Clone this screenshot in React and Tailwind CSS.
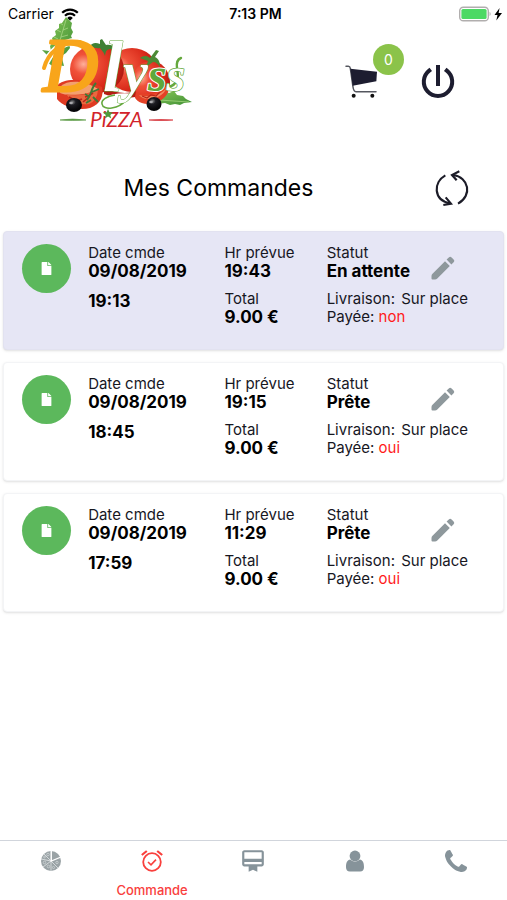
import { FaFile } from 'react-icons/fa';
import { MdCardMembership } from 'react-icons/md';

const orders = [
  { id: 1, date: '09/08/2019', time: '19:13', due: '19:43', total: '9.00 €', status: 'En attente', delivery: 'Sur place', paid: 'non', pending: true },
  { id: 2, date: '09/08/2019', time: '18:45', due: '19:15', total: '9.00 €', status: 'Prête', delivery: 'Sur place', paid: 'oui', pending: false },
  { id: 3, date: '09/08/2019', time: '17:59', due: '11:29', total: '9.00 €', status: 'Prête', delivery: 'Sur place', paid: 'oui', pending: false },
];

function WifiIcon() {
  return (
    <svg viewBox="0 0 18 13" className="w-[18px] h-[13px]" fill="none" stroke="#000" strokeWidth="2.2">
      <path d="M1.2 4.8a11 11 0 0 1 15.6 0" />
      <path d="M4 7.8a7 7 0 0 1 10 0" />
      <path d="M9 12.8 6.2 9.9a4 4 0 0 1 5.6 0z" fill="#000" stroke="none" />
    </svg>
  );
}

function BatteryIcon() {
  return (
    <svg viewBox="0 0 44 16" className="w-11 h-4">
      <rect x="0.7" y="1.2" width="28.6" height="13.6" rx="3.6" fill="#fff" stroke="#b1aeae" strokeWidth="1.4" />
      <rect x="2.4" y="3" width="25.2" height="10" rx="1.6" fill="#4cd964" />
      <path d="M30.6 5.8q2 2.2 0 4.4z" fill="#a5a5a5" />
      <path d="M40.6 2 35.5 9h3l-1.2 5.4L43 7h-3.4z" fill="#000" />
    </svg>
  );
}

function Logo() {
  return (
    <svg viewBox="0 0 156 116" className="w-[156px] h-[116px]" role="img" aria-label="Dlyss Pizza">
      <defs>
        <radialGradient id="tomato" cx="0.25" cy="0.4" r="0.8">
          <stop offset="0" stopColor="#ffb09a" />
          <stop offset="0.25" stopColor="#f0523a" />
          <stop offset="0.7" stopColor="#d92a1a" />
          <stop offset="1" stopColor="#a81710" />
        </radialGradient>
        <radialGradient id="olive" cx="0.4" cy="0.3" r="0.6">
          <stop offset="0" stopColor="#888" />
          <stop offset="0.35" stopColor="#1c1c22" />
          <stop offset="1" stopColor="#050507" />
        </radialGradient>
        <linearGradient id="leaf" x1="0" y1="0" x2="1" y2="1">
          <stop offset="0" stopColor="#86c556" />
          <stop offset="1" stopColor="#3f8f35" />
        </linearGradient>
      </defs>

      {/* basil leaves */}
      <path d="M28 1 24 7l-3 1 0 4-4 3 1 4-4 3 1 4-3 4 1 5-2 5 3 3 8-2 6-4 4-5-1-4 4-4-2-4 2-4-2-4 1-5-3-3z" fill="url(#leaf)" />
      <path d="M28 4 22 24 14 42M25 14l5-2m-7 9 7-2m-9 8 7-2m-3-16-3-2m1 9-4-2m1 9-4-2" stroke="#b2db8e" strokeWidth="0.7" fill="none" />
      <path d="m4 34 7 1 4-2 8 5 3 12-7-1 3 10-9 0 3-8-6-4 2-5z" fill="#5ba443" />
      <path d="m118 80 9-5 4 2 5-2 3 4 6 1 3 3 6 3-8 1-4 2-5-1-5 1-5-2-9 1z" fill="url(#leaf)" />
      <path d="m121 84 30 2" stroke="#a5d67f" strokeWidth="0.8" />

      {/* tomatoes */}
      <ellipse cx="94" cy="54" rx="25" ry="22" fill="url(#tomato)" />
      <ellipse cx="113" cy="66" rx="19" ry="21" fill="url(#tomato)" />
      <ellipse cx="59" cy="53" rx="27" ry="24" fill="url(#tomato)" />
      <path d="M62 28c-5-2-8-1-11 3 5 0 8 2 11 1 2 3 4 4 5 8 1-5 1-6 5-7 3 0 6 1 9 4-1-5-6-9-13-8l-4-6-2 1z" fill="#3f8134" />
      <path d="M112 42c-4-3-7-2-10 0l8 3-2 6 7-5c3 0 5 2 7 5 0-5-1-8-5-10l4-6-3-1z" fill="#4c8a35" />

      {/* cut halves */}
      <path d="M19 70c6-9 30-7 45 1 2 8-1 17-12 21-11 3-27-1-33-9z" fill="#df3a22" />
      <path d="M23 70c7-7 26-5 37 3-6 5-30 8-38 4z" fill="#f3a06f" />
      <path d="M28 78q13 4 32-4-1 11-9 14-15 2-23-10" fill="#e9683f" />
      <path d="M31 81q7 5 13 2m3-2q4-1 8-4m-10 9 6-5" stroke="#b9261a" strokeWidth="1.6" fill="none" />
      <path d="M58 67c-6 6-4 12-9 17m5-8 7-3m-9 8-5-3m8 3 5 5m-7-2-5 3" stroke="#3b7b36" strokeWidth="1.8" fill="none" />
      <path d="M96 75c13 7 29 1 35-8 2 12-8 20-21 21-9 0-15-5-14-13z" fill="#e44227" />
      <path d="M101 79c10 3 21 0 27-6-3 9-21 14-27 6z" fill="#f38b61" />
      <path d="m104 80 5 2 4-3 5 1 4-4" stroke="#b9261a" strokeWidth="1.2" fill="none" />
      <path d="M66 72q18 8 32 3l-1 6q-16 3-31-3z" fill="#b51c13" />

      {/* olives */}
      <ellipse cx="36" cy="89" rx="8" ry="7" fill="url(#olive)" />
      <ellipse cx="116" cy="88" rx="7.5" ry="7" fill="url(#olive)" />
      <ellipse cx="33" cy="87" rx="1.8" ry="1.3" fill="#a9a9ad" />
      <ellipse cx="113" cy="86" rx="1.8" ry="1.3" fill="#a9a9ad" />

      {/* swashes around the name */}
      <path d="M93 80c-12-1-27 1-28 8-1 8 17 6 24-3" stroke="#fff" strokeWidth="5" fill="none" />
      <path d="M77 79c-8 1-14 5-13 9 1 7 17 5 24-4" stroke="#65a83d" strokeWidth="1.6" fill="none" />
      <path d="M130 71c10-2 11-10 9-18-1-7 1-10 4-11" stroke="#65a83d" strokeWidth="2.4" fill="none" strokeLinecap="round" />
      <path d="M6 51C11 37 22 26 40 25" stroke="#fff" strokeWidth="7" fill="none" strokeLinecap="round" />
      <path d="M6 52C10 37 22 26 42 26" stroke="#f8a51b" strokeWidth="4" fill="none" strokeLinecap="round" />

      <text y="75" fontFamily="Liberation Serif, serif" fontStyle="italic" paintOrder="stroke" strokeLinejoin="round">
        <tspan x="5" fontSize="76" fill="#f8a51b" stroke="#f8a51b" strokeWidth="3">D</tspan>
        <tspan x="65" fontSize="72" fontWeight="bold" fill="#fff" stroke="#65a83d" strokeWidth="1">l</tspan>
        <tspan fontSize="56" fontWeight="bold" fill="#fff" stroke="#65a83d" strokeWidth="1">y</tspan>
        <tspan fontSize="48" fontWeight="bold" fill="#5fa83b" stroke="#fff" strokeWidth="2">s</tspan>
        <tspan fontSize="48" fontWeight="bold" fill="#fff" stroke="#65a83d" strokeWidth="1.4">s</tspan>
      </text>

      <path d="M22 104q12-2 26 0-14 1-26 0z" fill="#5b9a45" stroke="#5b9a45" strokeWidth="0.6" />
      <path d="M111 104q12-1 24 0-12 1-24 0z" fill="#d2232a" stroke="#d2232a" strokeWidth="0.6" />
      <text x="52" y="111" fontFamily="Lato, sans-serif" fontStyle="italic" fontSize="21" fill="#d2232a">PiZZA</text>
      <path d="m70 93 1.5 3.3 3.5.2-2.7 2.4 1 3.6-3.3-2-3.2 2 1-3.6-2.8-2.4 3.6-.2z" fill="#4f9a3c" />
    </svg>
  );
}

function CartIcon() {
  return (
    <svg viewBox="75 190 102 105" className="w-[34px] h-[35px]" fill="none">
      <path d="M78 197h7q5 0 6 6l8 56q2 14 9 14h60" stroke="#55575f" strokeWidth="4.5" strokeLinecap="round" />
      <path d="m91 204 80 9-2 29-71 13z" fill="#1d1d30" />
      <circle cx="101" cy="285" r="6" fill="#111" />
      <circle cx="157" cy="285" r="6" fill="#111" />
    </svg>
  );
}

function PowerIcon() {
  return (
    <svg viewBox="0 0 36 36" className="w-9 h-9" fill="none" stroke="#1d1d30" strokeWidth="4">
      <path d="M9.2 6.6a14.2 14.2 0 1 0 17.6 0" strokeLinecap="square" />
      <path d="M18 1v21" />
    </svg>
  );
}

function RefreshIcon() {
  return (
    <svg viewBox="0 0 120 120" className="w-10 h-10" fill="none" stroke="#1c1c28" strokeWidth="6.5">
      <path d="M37 22C0 43 1 96 50 106" />
      <path d="M60 21C108 27 119 83 75 107" />
      <path d="M79 10 57 21l14 16" />
      <path d="M31 111l23-4-16-19" />
    </svg>
  );
}

function PencilIcon() {
  return (
    <svg viewBox="0 0 24 24" className="size-6" fill="#8e989c">
      <path d="M14 5.2 18.8 10 6.3 22.5q-1 1-2.3 1H1.5q-1 0-1-1V20q0-1.3 1-2.3z" />
      <path d="m15.6 3.6 2.2-2.2q1.4-1.4 2.8 0l2 2q1.4 1.4 0 2.8l-2.2 2.2z" />
    </svg>
  );
}

function PizzaIcon() {
  return (
    <svg viewBox="0 0 22 22" className="w-[22px] h-[22px]">
      <circle cx="11" cy="11" r="10" fill="#9aa3a6" />
      <path d="M11 1v20M1 9l10 2M3 17l8-6 7 7M4 4l7 7" stroke="#e3e7e8" strokeWidth="0.8" fill="none" />
      <path d="M11.3 0v11l9.7-4" stroke="#fff" strokeWidth="1.3" fill="none" />
      <g fill="none" stroke="#d3d9da" strokeWidth="0.7">
        <circle cx="8" cy="4.5" r="1.3" />
        <circle cx="4.5" cy="12.5" r="1.3" />
        <circle cx="8.5" cy="16.5" r="1.3" />
        <circle cx="13.5" cy="17.5" r="1.1" />
        <circle cx="17" cy="12.5" r="1.2" />
        <circle cx="4.5" cy="7" r="0.9" />
      </g>
    </svg>
  );
}

function AlarmIcon() {
  return (
    <svg viewBox="0 0 22 22" className="w-[22px] h-[22px]" fill="none" stroke="currentColor">
      <circle cx="11" cy="12" r="8.8" strokeWidth="1.8" />
      <path d="m7 12 3 2.8 5-5.2" strokeWidth="1.6" />
      <path d="M0.8 5 5.8 1M21.2 5l-5-4" strokeWidth="2.2" />
    </svg>
  );
}

function UserIcon() {
  return (
    <svg viewBox="0 0 20 22" className="w-5 h-[22px]" fill="#86939a">
      <path d="M5.2 9.6C2.3 9.9 1 12.8 1 17.2 1 20 2.5 21.5 4.8 21.5h10.4c2.3 0 3.8-1.5 3.8-4.3 0-4.4-1.3-7.3-4.2-7.6a6.6 6.6 0 0 1-9.6 0z" />
      <circle cx="10" cy="6" r="5.4" />
    </svg>
  );
}

function PhoneIcon() {
  return (
    <svg viewBox="0 0 1408 1408" className="w-[22px] h-[22px]" fill="#86939a">
      <path d="M1408 1112q0 27-10 70.5t-21 68.5q-21 50-122 106-94 51-186 51-27 0-53-3.5t-57.5-12.5-47-14.5-55.5-20.5-49-18q-98-35-175-83-127-79-264-216T152 776q-48-77-83-175-3-9-18-49t-20.5-55.5-14.5-47T3.5 392 0 339q0-92 51-186Q107 52 157 31q25-11 68.5-21T296 0q14 0 21 3 18 6 53 76 11 19 30 54t35 63.5 31 53.5q3 4 17.5 25t21.5 35.5 7 28.5q0 20-28.5 50t-62 55-62 53-28.5 46q0 9 5 22.5t8.5 20.5 14 24 11.5 19q76 137 174 235t235 174q2 1 19 11.5t24 14 20.5 8.5 22.5 5q18 0 46-28.5t53-62 55-62 50-28.5q14 0 28.5 7t35.5 21.5 25 17.5q25 15 53.5 31t63.5 35 54 30q70 35 76 53 3 7 3 21z" />
    </svg>
  );
}

function OrderCard({ order }) {
  return (
    <li
      className={`grid grid-cols-[66fr_136fr_102fr_176fr] pl-[18px] pt-3 h-[119px] rounded-sm border shadow text-[15px] leading-[18px] text-[#17171f] ${
        order.pending ? 'bg-[#e6e6f5] border-[#e2e2f0]' : 'bg-white border-gray-100'
      }`}
    >
      <div>
        <div className="flex items-center justify-center size-[49px] rounded-full bg-[#5cb85c] text-white">
          <FaFile size={13} />
        </div>
      </div>
      <div>
        <p>Date cmde</p>
        <p className="text-[17px] leading-[18px] font-bold text-black">{order.date}</p>
        <p className="mt-3 text-[17px] leading-[18px] font-bold text-black">{order.time}</p>
      </div>
      <div>
        <p>Hr prévue</p>
        <p className="text-[17px] leading-[18px] font-bold text-black">{order.due}</p>
        <p className="mt-[10px]">Total</p>
        <p className="text-[17px] leading-[18px] font-bold text-black">{order.total}</p>
      </div>
      <div>
        <div className="grid grid-cols-[104fr_71fr]">
          <div>
            <p>Statut</p>
            <p className="text-[17px] leading-[18px] font-bold text-black whitespace-nowrap">{order.status}</p>
          </div>
          <button aria-label="Modifier" className="justify-self-start self-end">
            <PencilIcon />
          </button>
        </div>
        <p className="mt-[10px] whitespace-nowrap">Livraison: <span className="ml-0.5">{order.delivery}</span></p>
        <p>Payée: <span className="text-[#ff1a1a]">{order.paid}</span></p>
      </div>
    </li>
  );
}

const tabs = [
  { name: 'Pizzas', icon: <PizzaIcon /> },
  { name: 'Commande', icon: <AlarmIcon />, active: true },
  { name: 'Fidélité', icon: <MdCardMembership size={26} /> },
  { name: 'Compte', icon: <UserIcon /> },
  { name: 'Contact', icon: <PhoneIcon /> },
];

export default function App() {
  return (
    <div className="min-h-screen flex flex-col bg-white text-black font-[Inter,sans-serif]">
      <div className="grid grid-cols-3 items-center h-7 pl-2 pr-1 text-sm">
        <div className="flex items-center gap-[7px]">Carrier <WifiIcon /></div>
        <div className="text-center font-semibold">7:13 PM</div>
        <div className="flex justify-end"><BatteryIcon /></div>
      </div>

      <header className="-mt-3 flex items-start justify-between pl-[38px] pr-[51px]">
        <Logo />
        <div className="flex items-start gap-[41px] pt-12">
          <button aria-label="Panier" className="relative">
            <CartIcon />
            <span className="absolute -top-5 left-7 flex items-center justify-center size-[31px] rounded-full bg-[#8bc34a] text-white text-sm">0</span>
          </button>
          <button aria-label="Déconnexion"><PowerIcon /></button>
        </div>
      </header>

      <main className="flex-1">
        <div className="grid grid-cols-[1fr_auto] items-center pt-9 pr-[34px]">
          <h1 className="pl-1 text-[23px] text-center">Mes Commandes</h1>
          <button aria-label="Actualiser"><RefreshIcon /></button>
        </div>

        <ul className="mt-[23px] px-[3px] flex flex-col gap-3">
          {orders.map(order => <OrderCard key={order.id} order={order} />)}
        </ul>
      </main>

      <nav className="grid grid-cols-5 h-[60px] border-t border-gray-300 text-[#86939a]">
        {tabs.map(tab => (
          <a
            key={tab.name}
            href="#"
            aria-label={tab.name}
            className={`flex flex-col items-center pt-2 ${tab.active ? 'text-[#f9403d]' : ''}`}
          >
            <span className="flex items-center justify-center h-6">{tab.icon}</span>
            {tab.active && <span className="mt-2 text-[13px] leading-[18px] font-medium">{tab.name}</span>}
          </a>
        ))}
      </nav>
    </div>
  );
}
